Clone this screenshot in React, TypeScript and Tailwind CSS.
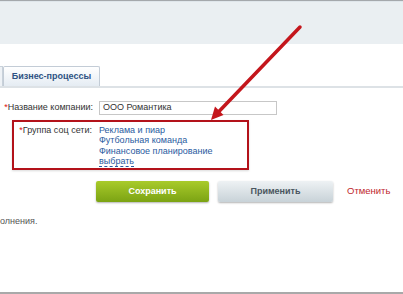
import React from 'react'

const links = ['Реклама и пиар', 'Футбольная команда', 'Финансовое планирование']

const Arrow = () => (
  <svg className="absolute left-0 top-0 pointer-events-none" width="403" height="294" viewBox="0 0 403 294">
    <line x1="300" y1="27" x2="218" y2="112.5" stroke="#c4161c" strokeWidth="3.5" strokeLinecap="round" />
    <polygon points="211,120 223.5,115 215,106.5" fill="#c4161c" />
  </svg>
)

const App = () => {
  return (
    <div className="relative w-[403px] h-[294px] overflow-hidden bg-white font-['Liberation_Sans',Arial,sans-serif] text-[9px] text-[#333]">
      <div className="h-[1px] bg-[#a4a8ac]" />
      <div className="h-[43px] bg-[#eaeff2] border-t border-[#dfe6eb]" />

      <div className="mt-[22px] flex h-[22px] items-end border-b-2 border-[#dde2e6]">
        <div className="h-full w-[3px] border-r border-t border-[#c8d1da] bg-[#eef2f6]" />
        <div className="h-full w-[97px] flex items-center justify-center rounded-t-[2px] border border-b-0 border-[#c3ccd6] bg-gradient-to-b from-white to-[#e5ecf3] text-[9px] font-bold text-[#2f5283]">
          Бизнес-процессы
        </div>
      </div>

      <div className="mt-[13px] flex items-center h-[14px]">
        <div className="w-[93px] text-right">
          <span className="text-[#d11]">*</span>Название компании:
        </div>
        <div className="ml-[6px] w-[178px] h-[14px] flex items-center border border-[#c7c7c7] px-[3px] text-[#333]">
          ООО Романтика
        </div>
      </div>

      <div className="mt-[5px] ml-[12px] w-[237px] h-[50px] border-2 border-[#b3121a] flex pt-[3px] shadow-[0_1px_2px_rgba(0,0,0,0.15)]">
        <div className="w-[78px] text-right leading-[10.3px]">
          <span className="text-[#d11]">*</span>Группа соц сети:
        </div>
        <div className="ml-[7px] flex flex-col leading-[10.3px] text-[#2a5ba0]">
          {links.map(l => (
            <span key={l}>{l}</span>
          ))}
          <span className="self-start border-b border-dashed border-[#2a5ba0] leading-[10px]">выбрать</span>
        </div>
      </div>

      <div className="mt-[11px] flex items-center h-[21px]">
        <button className="ml-[96px] w-[113px] h-[21px] rounded-[2px] bg-gradient-to-b from-[#a9cb2a] to-[#7ba313] text-white font-bold text-[9px] shadow-[0_1px_2px_rgba(0,0,0,0.3)]">
          Сохранить
        </button>
        <button className="ml-[9px] w-[115px] h-[21px] rounded-[2px] bg-gradient-to-b from-[#eef2f4] to-[#c8d2d8] text-[#4b5660] font-bold text-[9px] shadow-[0_1px_2px_rgba(0,0,0,0.3)]">
          Применить
        </button>
        <span className="ml-[14px] text-[9.5px] text-[#c0282d]">Отменить</span>
      </div>

      <div className="mt-[13px] text-[#555] text-[9px]">олнения.</div>

      <div className="absolute left-0 bottom-0 w-full h-[2px] bg-[#a9a9a9]" />
      <Arrow />
    </div>
  )
}

export default App
